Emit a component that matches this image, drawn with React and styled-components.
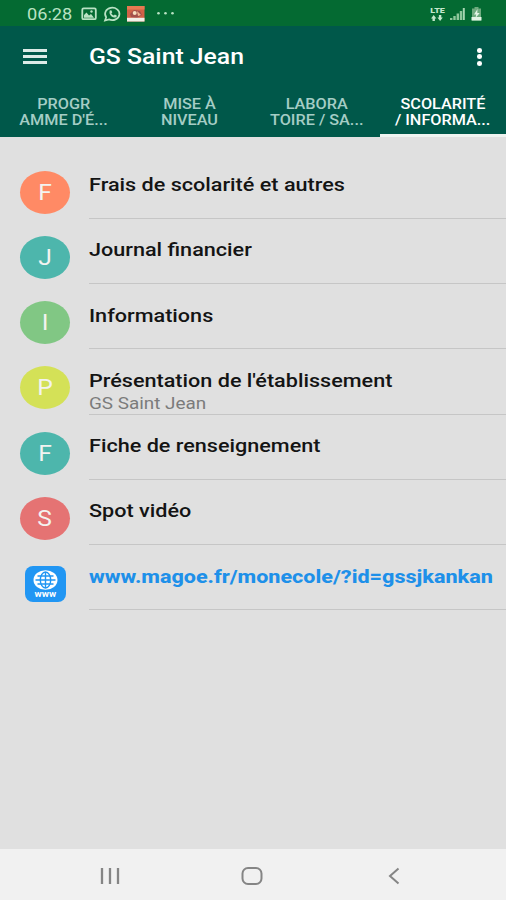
import styled, { createGlobalStyle } from "styled-components";

const tabs = [
  { lines: ["PROGR", "AMME D'É..."] },
  { lines: ["MISE À", "NIVEAU"] },
  { lines: ["LABORA", "TOIRE / SA..."] },
  { lines: ["SCOLARITÉ", "/ INFORMA..."], active: true },
];

const items = [
  { letter: "F", color: "#ff8a65", title: "Frais de scolarité et autres" },
  { letter: "J", color: "#4db6ac", title: "Journal financier" },
  { letter: "I", color: "#81c784", title: "Informations" },
  { letter: "P", color: "#d4e157", title: "Présentation de l'établissement", subtitle: "GS Saint Jean" },
  { letter: "F", color: "#4db6ac", title: "Fiche de renseignement" },
  { letter: "S", color: "#e57373", title: "Spot vidéo" },
];

const StatusIcons = () => (
  <svg width="92" height="18" viewBox="0 0 92 18">
    <rect x="2.3" y="3.4" width="13.5" height="10.8" rx="1.3" fill="none" stroke="#b9e2c3" strokeWidth="1.8" />
    <path d="M4 12.8V10l2.5-2.5 2.5 3 2-1.5 3 3.8z" fill="#b9e2c3" />
    <circle cx="11.5" cy="6.5" r="1.2" fill="#b9e2c3" />
    <path d="M25 15.5l1.2-3.3A7.2 6.2 0 1 1 29 14.4z" fill="none" stroke="#b9e2c3" strokeWidth="1.7" />
    <path d="M29.8 5.6l1.5-.4 1 2.1-1 1.1c.6 1.1 1.5 1.8 2.5 2.200l1.100-1 2 1.100c-.2 1.400-1.200 2-2.600 1.900-3.300-.6-5.700-3.600-4.500-7z" fill="#b9e2c3" />
    <rect x="47" y="1" width="17.5" height="15.5" fill="#cf6247" />
    <rect x="47" y="1" width="17.5" height="3.5" fill="#e67a51" />
    <path d="M50 9l4-4 6 1 2 4-5 3-6-1z" fill="#a3504b" />
    <circle cx="54.7" cy="8" r="2" fill="#f6ddbd" />
    <path d="M57 6l4 4-3 1z" fill="#f1ba94" />
    <rect x="47" y="12.8" width="17.5" height="3.7" fill="#f3f1e9" />
    <circle cx="78.5" cy="8.3" r="1.3" fill="#b9e2c3" />
    <circle cx="85.5" cy="8.3" r="1.3" fill="#b9e2c3" />
    <circle cx="92.5" cy="8.3" r="1.3" fill="#b9e2c3" />
  </svg>
);

const SignalIcon = () => (
  <svg width="15" height="14" viewBox="0 0 15 14">
    <path d="M1.2 13v-2M4.5 13V9M7.8 13V6.5M11 13V4" stroke="#8fc79c" strokeWidth="2.4" />
    <path d="M13.8 13V1" stroke="#a8d6b2" strokeWidth="2" />
  </svg>
);

const BatteryIcon = () => (
  <svg width="11" height="14" viewBox="0 0 11 14">
    <path d="M3.5 0h4v1.5H10v12H1v-12h2.5z" fill="#6fab7f" />
    <path d="M.5 10h10v3.500H.5z" fill="#e3f4e5" />
    <path d="M6.5 2L3 7.500h2.200L4.500 11l4.200-5H6.300z" fill="#e3f4e5" />
  </svg>
);

const GlobeIcon = () => (
  <svg width="25" height="20" viewBox="0 0 25 20">
    <ellipse cx="12.5" cy="10" rx="12" ry="9.8" fill="#fff" />
    <g fill="none" stroke="#2196f3" strokeWidth="1.4">
      <ellipse cx="12.5" cy="10" rx="5.2" ry="8" />
      <path d="M12.5 2v16M2.500 10h20M4.500 6h16M4.500 14h16" />
    </g>
  </svg>
);

const App = () => {
  return (
    <Screen>
      <GlobalStyle />
      <StatusBar>
        <Clock><Text $x={1.07}>06:28</Text></Clock>
        <StatusIcons />
        <Network>
          <Lte>
            <Text $x={1.12} $center>LTE</Text>
            <svg width="12" height="6" viewBox="0 0 12 6">
              <path d="M0 3.5L2.7 0l2.700 3.500H3.900V6H1.500V3.500zM6.400 2.500L9.100 6l2.700-3.500h-1.500V0H7.900v2.500z" fill="#c3e7cb" />
            </svg>
          </Lte>
          <SignalIcon />
          <BatteryIcon />
        </Network>
      </StatusBar>

      <AppBar>
        <MenuButton aria-label="Menu"><i /><i /><i /></MenuButton>
        <Heading><Text $x={1.125}>GS Saint Jean</Text></Heading>
        <MoreButton aria-label="Options"><i /><i /><i /></MoreButton>
      </AppBar>

      <Tabs>
        {tabs.map((tab) => (
          <Tab key={tab.lines[0]} $active={tab.active}>
            {tab.lines.map((line) => (
              <Text key={line} $x={1.12} $center>{line}</Text>
            ))}
          </Tab>
        ))}
      </Tabs>

      <List>
        {items.map((item) => (
          <Row key={item.title}>
            <Avatar $color={item.color}><Text $x={1.12} $center>{item.letter}</Text></Avatar>
            <Content>
              <Title><Text $x={1.168}>{item.title}</Text></Title>
              {item.subtitle && <Subtitle><Text $x={1.18}>{item.subtitle}</Text></Subtitle>}
            </Content>
          </Row>
        ))}
        <Row>
          <WebBadge>
            <GlobeIcon />
            <Text $x={1.15} $center>www</Text>
          </WebBadge>
          <Content>
            <Link><Text $x={1.165}>www.magoe.fr/monecole/?id=gssjkankan</Text></Link>
          </Content>
        </Row>
      </List>

      <NavBar>
        <svg width="20" height="18" viewBox="0 0 20 18">
          <path d="M2 1v16M10 1v16M18 1v16" stroke="#858585" strokeWidth="2.300" />
        </svg>
        <svg width="22" height="18" viewBox="0 0 22 18">
          <rect x="1.5" y="1" width="19" height="16" rx="5.5" fill="none" stroke="#858585" strokeWidth="2" />
        </svg>
        <svg width="12" height="18" viewBox="0 0 12 18">
          <path d="M10.5 1.500L2 9l8.500 7.500" fill="none" stroke="#858585" strokeWidth="2" />
        </svg>
      </NavBar>
    </Screen>
  );
};

const GlobalStyle = createGlobalStyle`
  body {
    margin: 0;
    font-family: Roboto, "Liberation Sans", sans-serif;
  }
  * {
    box-sizing: border-box;
  }
`;

const Screen = styled.div`
  width: 506px;
  height: 900px;
  display: flex;
  flex-direction: column;
  background-color: #e0e0e0;
  overflow: hidden;
`;

// every label is stretched a bit sideways
const Text = styled.span`
  display: block;
  white-space: nowrap;
  transform: scaleX(${({ $x }) => $x});
  transform-origin: ${({ $center }) => ($center ? "center" : "left")};
`;

const StatusBar = styled.div`
  height: 26px;
  flex: none;
  display: flex;
  align-items: center;
  padding: 1px 24px 0 27px;
  background-color: #046a32;
  svg {
    overflow: visible;
  }
`;

const Clock = styled.div`
  width: 53px;
  color: #b9e2c3;
  font-size: 17px;
`;

const Network = styled.div`
  display: flex;
  align-items: center;
  gap: 6px;
  margin-left: auto;
`;

const Lte = styled.div`
  display: flex;
  flex-direction: column;
  align-items: center;
  color: #c3e7cb;
  font-size: 8px;
  font-weight: 900;
  line-height: 8px;
`;

const AppBar = styled.div`
  height: 62px;
  flex: none;
  display: flex;
  align-items: center;
  padding: 0 24px 1px 23px;
  background-color: #00584a;
`;

const MenuButton = styled.div`
  width: 66px;
  display: flex;
  flex-direction: column;
  gap: 3px;
  i {
    width: 24px;
    height: 3px;
    background-color: #dcebe7;
  }
`;

const Heading = styled.div`
  flex: 1;
  color: #fff;
  font-size: 22px;
  font-weight: 500;
`;

const MoreButton = styled.div`
  display: flex;
  flex-direction: column;
  gap: 1.5px;
  i {
    width: 5.5px;
    height: 5px;
    border-radius: 50%;
    background-color: #fff;
  }
`;

const Tabs = styled.div`
  height: 49px;
  flex: none;
  display: grid;
  grid-template-columns: repeat(4, 1fr);
  background-color: #00584a;
`;

const Tab = styled.div`
  display: flex;
  flex-direction: column;
  align-items: center;
  padding-top: 8.5px;
  color: ${({ $active }) => ($active ? "#fff" : "#a5cdc5")};
  border-bottom: 3px solid ${({ $active }) => ($active ? "#eef3f0" : "transparent")};
  font-size: 14.5px;
  font-weight: 500;
  line-height: 16.5px;
`;

const List = styled.div`
  flex: 1;
  padding-top: 16.5px;
`;

const Row = styled.div`
  height: 65.25px;
  display: flex;
  align-items: flex-start;
  padding-left: 20px;
`;

const Avatar = styled.div`
  width: 50px;
  height: 43px;
  flex: none;
  margin-top: 17px;
  display: flex;
  align-items: center;
  justify-content: center;
  border-radius: 50%;
  background-color: ${({ $color }) => $color};
  color: #f3f3f0;
  font-size: 22px;
`;

const Content = styled.div`
  height: 100%;
  flex: 1;
  margin-left: 19px;
  padding-top: 19.5px;
  border-bottom: 1px solid #c6c6c6;
`;

const Title = styled.div`
  color: #141414;
  font-size: 18.5px;
  font-weight: 500;
  line-height: 24px;
`;

const Subtitle = styled.div`
  padding-top: 3px;
  color: #7b7b7b;
  font-size: 16px;
  line-height: 16px;
`;

const Link = styled(Title)`
  color: #1e90e9;
  font-weight: 800;
`;

const WebBadge = styled.div`
  width: 41px;
  height: 36px;
  flex: none;
  margin: 20.5px 4px 0 5px;
  padding-top: 4px;
  display: flex;
  flex-direction: column;
  align-items: center;
  border-radius: 8px;
  background-color: #2196f3;
  color: #fff;
  font-size: 8.5px;
  font-weight: 700;
  line-height: 9px;
`;

const NavBar = styled.div`
  height: 51px;
  flex: none;
  display: flex;
  align-items: center;
  justify-content: space-between;
  padding: 3px 106px 0 100px;
  background-color: #f1f1f1;
  svg:nth-child(2) {
    margin-right: 5px;
  }
`;

export default App;
